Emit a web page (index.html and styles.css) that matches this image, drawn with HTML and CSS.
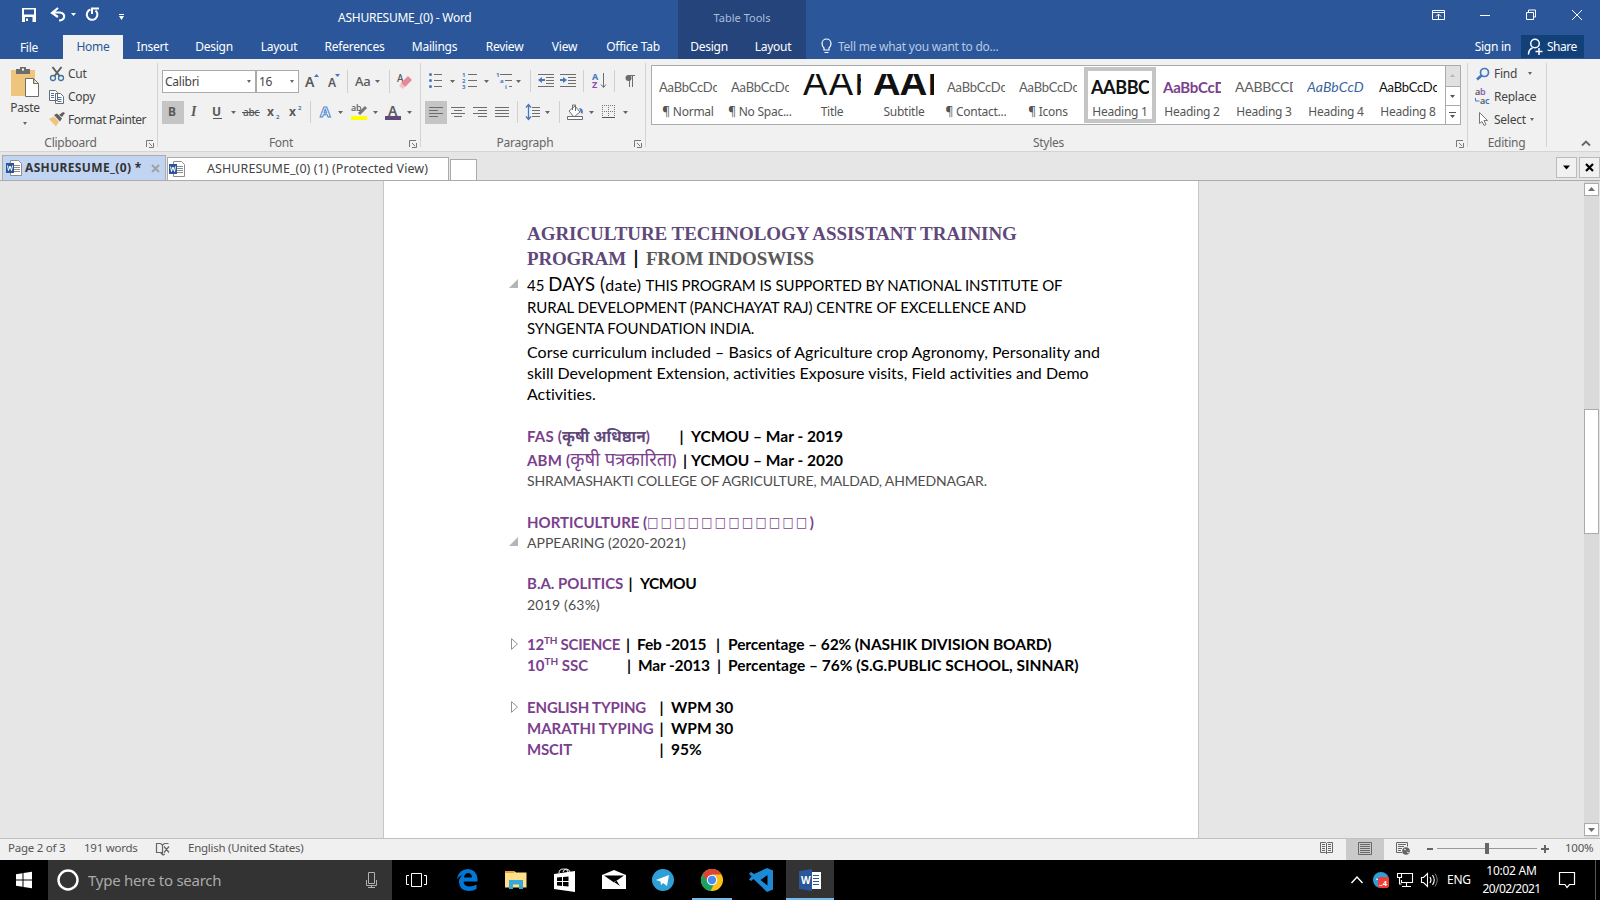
FILE: index.html
```html
<!DOCTYPE html>
<html lang="en">
<head>
<meta charset="utf-8">
<title>ASHURESUME_(0) - Word</title>
<link rel="stylesheet" href="styles.css">
</head>
<body>
<div class="app">
<header class="top">
  <div class="titlebar">
    <svg class="quick" viewBox="0 0 220 35" width="220" height="35">
      <path fill="#fff" fill-rule="evenodd" d="M22 8h14v14h-14zM24 9.500v5h10v-5zM25 17v5h7.500v-5zM26 18.500h2v2.500h-2z"/>
      <path d="M58 8l-6 5 6 4M53 12.500h7q5 1 4 5q-1 3-5 3" fill="none" stroke="#fff" stroke-width="2.200"/>
      <path d="M71 13h5l-2.500 3zM119 16h5l-2.500 4zM119 14h5v1h-5z" fill="#fff"/>
      <path d="M90.500 9.500a5.300 5.300 0 1 0 5 1M92 14V8.500h7" fill="none" stroke="#fff" stroke-width="2"/>
    </svg>
    <div class="apptitle"><span>ASHURESUME_(0) - Word</span></div>
    <div class="tabletools"><span>Table Tools</span></div>
    <svg class="winbtns" viewBox="1420 0 180 35" width="180" height="35" fill="none" stroke="#fff">
      <path d="M1432.500 10.500h12v9h-12zM1432.500 12.500h12M1438.500 19v-5M1436 16.500l2.500-2.500 2.500 2.500M1480 15.500h10M1526.500 12.500h7v7h-7zM1528.500 12v-2h7v7h-2M1572 10l10 10M1582 10l-10 10"/>
    </svg>
  </div>
  <nav class="tabs">
    <div class="tab file"><span>File</span></div>
    <div class="tab home"><span>Home</span></div>
    <div class="tab w59"><span>Insert</span></div>
    <div class="tab w64"><span>Design</span></div>
    <div class="tab w66"><span>Layout</span></div>
    <div class="tab w85"><span>References</span></div>
    <div class="tab w75"><span>Mailings</span></div>
    <div class="tab w65"><span>Review</span></div>
    <div class="tab w55"><span>View</span></div>
    <div class="tab w82"><span>Office Tab</span></div>
    <div class="tab tool w62"><span>Design</span></div>
    <div class="tab tool w66"><span>Layout</span></div>
    <svg viewBox="806 35 32 24" width="32" height="24" fill="none" stroke="#fff"><path d="M824 48q-2-2-2-4.500a4.500 4.500 0 0 1 9 0q0 2.500-2 4.500v2h-5zM824.500 52.500h4" stroke-width="1.200"/></svg>
    <span class="tell">Tell me what you want to do...</span>
    <span class="signin">Sign in</span>
    <div class="share">
      <svg viewBox="1521 35 24 23" width="24" height="23" fill="none" stroke="#fff" stroke-width="1.500"><circle cx="1533" cy="43.500" r="4.300"/><path d="M1526.500 54.500q0-5 4-6.500M1533.500 51.500h7M1537 48v7"/></svg>
      <span>Share</span>
    </div>
  </nav>
</header>

<section class="ribbon">
  <div class="group clip">
    <div class="body">
      <div class="paste">
        <svg viewBox="9 64 36 35" width="36" height="35"><path fill="#eec57a" d="M13 70h24v26h-24z"/><path fill="#6d6d6d" d="M18 69h4v-2h6v2h4v5h-14z"/><path fill="#fff" d="M24 68.500h2v2h-2z"/><path fill="#fff" stroke="#6d6d6d" d="M27.500 78.500h8l5 5v13h-13zM35.500 78.500v5h5"/></svg>
        <span>Paste</span>
        <i class="dd"></i>
      </div>
      <div class="cmds">
        <div class="cmd"><svg viewBox="48 62 18 22" width="18" height="22" fill="none"><path stroke="#5f5f5f" stroke-width="2" d="M52.500 66l7 9M61.500 66l-7 9"/><circle cx="53" cy="77" r="2.500" stroke="#41719c" stroke-width="1.300"/><circle cx="61" cy="77" r="2.500" stroke="#41719c" stroke-width="1.300"/></svg><span>Cut</span></div>
        <div class="cmd"><svg viewBox="48 85 18 22" width="18" height="22" fill="#fff" stroke="#6d6d6d"><path d="M49.500 89.500h6l2 2v8h-8zM55.500 92.500h5l3 3v7h-8z"/><path stroke="#4178be" d="M51 92.500h3M51 94.500h3M51 96.500h3M57.500 96.500h4M57.500 98.500h4M57.500 100.500h4"/></svg><span>Copy</span></div>
        <div class="cmd"><svg viewBox="48 109 18 22" width="18" height="22"><path fill="#eec57a" d="M49 119l5-2.500 5 5-3 5z"/><path fill="#5f5f5f" d="M54 115l3-1.500 5 5-2 3zM59 115l4-3 2 1-3 4z"/></svg><span class="fp">Format Painter</span></div>
      </div>
    </div>
    <div class="glabel"><span>Clipboard</span><svg class="launch" viewBox="0 0 8 8" width="8" height="8"><path d="M.5 7V.5H7M3 3l3 3M7.500 3v4.500h-4.500" fill="none" stroke="#777"/></svg></div>
  </div>

  <div class="group font">
    <div class="row1">
      <div class="combo name"><span>Calibri</span><i class="dd"></i></div>
      <div class="combo size"><span>16</span><i class="dd"></i></div>
      <svg viewBox="299 70 120 23" width="120" height="23">
        <g class="glyph semi"><text x="305" y="87" font-size="14">A</text><text x="328" y="87" font-size="12">A</text></g><text class="glyph2" x="355" y="86" font-size="13">Aa</text>
        <path fill="#4178be" d="M314 77l2.500-3 2.500 3zM335 74h5l-2.500 3z"/><path fill="#666" d="M375 80h5l-2.500 3z"/>
        <path stroke="#d0d0d0" d="M347.500 70v23M389.500 70v23"/>
        <text class="glyph2" x="397" y="82" font-size="10">A</text><path d="M401 83l7-7 4 4-7 7z" fill="#e8879a"/><path d="M401 83l4 4-2 2-4-3z" fill="#f5c0ca"/>
      </svg>
    </div>
    <div class="row2">
      <svg viewBox="162 101 256 23" width="256" height="23">
        <path fill="#c5c5c5" d="M162 101h22v23h-22z"/>
        <g class="glyph"><text x="168" y="116" font-size="12">B</text><text class="ital" x="191" y="116" font-size="14">I</text><text x="212" y="116" font-size="12">U</text><text x="267" y="116" font-size="12">x</text><text x="289" y="116" font-size="12">x</text></g>
        <text class="glyph2" x="243" y="116" font-size="10" textLength="16">abc</text>
        <path stroke="#555" d="M213 118.500h9M242 112.500h18"/>
        <text x="276" y="119" font-size="6" class="blue">2</text><text x="298" y="110" font-size="6" class="blue">2</text>
        <path fill="#666" d="M231 111h5l-2.500 3zM338 111h5l-2.500 3zM373 111h5l-2.500 3zM407 111h5l-2.500 3z"/>
        <path stroke="#d0d0d0" d="M310.500 101v22"/>
        <text class="glow" x="320" y="117" font-size="15">A</text>
        <text class="glyph2" x="351" y="111" font-size="9">ab</text><path stroke="#777" stroke-width="3" d="M366 107l-7 7"/><path fill="#ff0" d="M351 116h16v4h-16z"/>
        <text class="glyph semi" x="388" y="116" font-size="14">A</text><path fill="#5f497a" d="M385 116h16v4h-16z"/>
      </svg>
    </div>
    <div class="glabel"><span>Font</span><svg class="launch" viewBox="0 0 8 8" width="8" height="8"><path d="M.5 7V.5H7M3 3l3 3M7.500 3v4.500h-4.500" fill="none" stroke="#777"/></svg></div>
  </div>

  <div class="group para">
    <div class="row1">
      <svg viewBox="425 70 215 23" width="215" height="23">
        <g fill="#4178be"><circle cx="430.500" cy="74.500" r="1.500"/><circle cx="430.500" cy="80.500" r="1.500"/><circle cx="430.500" cy="86.500" r="1.500"/></g>
        <path stroke="#6d6d6d" d="M434 74.500h8M434 80.500h8M434 86.500h8M468 74.500h9M468 80.500h9M468 86.500h9M500 74.500h12M505 80.500h7M509 86.500h3"/>
        <g class="blue" font-size="6"><text x="462" y="77">1</text><text x="462" y="83">2</text><text x="462" y="89">3</text><text x="496" y="77">1</text><text x="500" y="83">a</text><text x="505" y="89">i</text></g>
        <path fill="#666" d="M450 80h5l-2.500 3zM484 80h5l-2.500 3zM516 80h5l-2.500 3z"/>
        <path stroke="#d0d0d0" d="M530.500 70v22M583.500 70v22M614.500 70v22"/>
        <path stroke="#6d6d6d" d="M538 74.500h16M546 77.500h8M546 80.500h8M546 83.500h8M538 86.500h16M560 74.500h16M568 77.500h8M568 80.500h8M568 83.500h8M560 86.500h16"/>
        <path fill="#4178be" d="M538 80l4-3v2h3v2h-3v2zM567 80l-4-3v2h-3v2h3v2z"/>
        <g class="blue" font-size="9"><text x="592" y="79.500">A</text><text class="purple" x="592" y="88">Z</text></g>
        <path d="M603.500 73v14M601 84.500l2.500 3 2.500-3" stroke="#6d6d6d" fill="none"/>
        <path d="M629.500 75v12M632.500 75v12M628 75.500h7" stroke="#6d6d6d"/><circle cx="628.500" cy="78" r="3" fill="#6d6d6d"/>
      </svg>
    </div>
    <div class="row2">
      <svg viewBox="425 101 215 23" width="215" height="23">
        <path fill="#c5c5c5" d="M425 101h22v23h-22z"/>
        <path stroke="#6d6d6d" d="M429 107.500h14M429 110.500h9M429 113.500h14M429 116.500h9M451 107.500h14M454 110.500h8M451 113.500h14M454 116.500h8M473 107.500h14M478 110.500h9M473 113.500h14M478 116.500h9M495 107.500h14M495 110.500h14M495 113.500h14M495 116.500h14M532 107.500h8M532 110.500h8M532 113.500h8M532 116.500h8"/>
        <path stroke="#d0d0d0" d="M517.500 101v22M559.500 101v22"/>
        <path d="M528.500 105v14M526 107.500l2.500-3 2.500 3M526 116.500l2.500 3 2.500-3" fill="none" stroke="#4178be" stroke-width="1.300"/>
        <path fill="#666" d="M545 111h5l-2.500 3zM589 111h5l-2.500 3zM623 111h5l-2.500 3z"/>
        <path fill="#fff" stroke="#6d6d6d" d="M569 111l6-5 5 6-6 5zM572.500 110v-5h3v6M567.500 116.500h15v3h-15z"/><path d="M579 108q5 0 3.500 6q-2-1-2.500-4z" fill="#4178be"/>
        <path d="M602 105.500h13M602 111.500h13M602.500 105v12M608.500 105v12M614.500 105v12" stroke="#777" stroke-dasharray="1 1"/><path stroke="#555" d="M602 117.500h13"/>
      </svg>
    </div>
    <div class="glabel"><span>Paragraph</span><svg class="launch" viewBox="0 0 8 8" width="8" height="8"><path d="M.5 7V.5H7M3 3l3 3M7.500 3v4.500h-4.500" fill="none" stroke="#777"/></svg></div>
  </div>

  <div class="group styles">
    <div class="gallery">
      <div class="style"><div class="prev"><span>AaBbCcDc</span></div><span>¶ Normal</span></div>
      <div class="style"><div class="prev"><span>AaBbCcDc</span></div><span>¶ No Spac...</span></div>
      <div class="style"><div class="prev title"><span>AAb</span></div><span>Title</span></div>
      <div class="style"><div class="prev title heavy"><span>AAB</span></div><span>Subtitle</span></div>
      <div class="style"><div class="prev"><span>AaBbCcDc</span></div><span>¶ Contact...</span></div>
      <div class="style"><div class="prev"><span>AaBbCcDc</span></div><span>¶ Icons</span></div>
      <div class="style on"><div class="prev h1"><span>AABBC</span></div><span>Heading 1</span></div>
      <div class="style"><div class="prev h2"><span>AaBbCcD</span></div><span>Heading 2</span></div>
      <div class="style"><div class="prev h3"><span>AABBCCD</span></div><span>Heading 3</span></div>
      <div class="style"><div class="prev h4"><span>AaBbCcD</span></div><span>Heading 4</span></div>
      <div class="style"><div class="prev h8"><span>AaBbCcDc</span></div><span>Heading 8</span></div>
      <svg class="gscroll" viewBox="1445 66 15 58" width="15" height="58"><path fill="#e1e1e1" d="M1445 66h15v20h-15z"/><path stroke="#ababab" d="M1445.500 66v58M1445 86.500h15M1445 105.500h15"/><path fill="#b5b5b5" d="M1450 77h5l-2.500-3z"/><path fill="#555" d="M1450 95h5l-2.500 3zM1450 115h5l-2.500 3zM1449 112h7v1h-7z"/></svg>
    </div>
    <div class="glabel"><span>Styles</span><svg class="launch" viewBox="0 0 8 8" width="8" height="8"><path d="M.5 7V.5H7M3 3l3 3M7.500 3v4.500h-4.500" fill="none" stroke="#777"/></svg></div>
  </div>

  <div class="group edit">
    <div class="cmds">
      <div class="cmd"><svg viewBox="1474 62 20 22" width="20" height="22" fill="none" stroke="#4178be"><circle cx="1484.500" cy="71.500" r="4" stroke-width="1.700"/><path stroke-width="2.600" d="M1481.500 74.500l-4.500 4"/></svg><span>Find</span><i class="dd far"></i></div>
      <div class="cmd"><svg viewBox="1474 85 20 22" width="20" height="22"><text class="glyph semi" x="1475" y="94" font-size="9">a<tspan fill="#8a5bb0">b</tspan></text><text class="glyph semi" x="1480" y="103" font-size="9">a<tspan fill="#4178be">c</tspan></text><path d="M1475.500 97v3h4" stroke="#4178be" fill="none"/></svg><span>Replace</span></div>
      <div class="cmd"><svg viewBox="1474 109 20 22" width="20" height="22"><path fill="#fff" stroke="#777" d="M1479.500 112.500v11l2.500-2 2 4 2-1-2-4h3.500z"/></svg><span>Select</span><i class="dd near"></i></div>
    </div>
    <div class="glabel"><span>Editing</span></div>
  </div>
  <svg class="collapse" viewBox="1578 136 14 14" width="14" height="14"><path d="M1581 145.500l4-4 4 4" fill="none" stroke="#666" stroke-width="1.800"/></svg>
</section>

<section class="doctabs">
  <div class="dtab act"><svg viewBox="0 0 17 16" width="17" height="16"><path fill="#fff" stroke="#8c8c8c" d="M4.500 .5h8l3 3v12h-11z"/><path stroke="#8c8c8c" d="M8 5.500h6M8 7.500h6M8 9.500h6M8 11.500h6"/><path fill="#2b579a" d="M0 3h8v10h-8z"/><path d="M1.500 5.500l1 5 1.500-4.500 1.500 4.500 1-5" fill="none" stroke="#fff"/></svg><span>ASHURESUME_(0) *</span><svg class="x" viewBox="0 0 9 9" width="9" height="9"><path d="M1 1l7 7M8 1l-7 7" stroke="#a0a0a0" stroke-width="1.800"/></svg></div>
  <div class="dtab prot"><svg viewBox="0 0 17 16" width="17" height="16"><path fill="#fff" stroke="#8c8c8c" d="M4.500 .5h8l3 3v12h-11z"/><path stroke="#8c8c8c" d="M8 5.500h6M8 7.500h6M8 9.500h6M8 11.500h6"/><path fill="#2b579a" d="M0 3h8v10h-8z"/><path d="M1.500 5.500l1 5 1.500-4.500 1.500 4.500 1-5" fill="none" stroke="#fff"/></svg><span>ASHURESUME_(0) (1) (Protected View)</span></div>
  <div class="dtab new"></div>
  <div class="dbtn first"><svg viewBox="0 0 19 19" width="19" height="19"><path d="M6 7.500h7l-3.500 4z"/></svg></div>
  <div class="dbtn"><svg viewBox="0 0 19 19" width="19" height="19"><path d="M6 6l7 7M13 6l-7 7" stroke="#000" stroke-width="2.200"/></svg></div>
</section>

<main class="work">
  <article class="page">
    <div class="ln g42 serif"><span class="s1">AGRICULTURE TECHNOLOGY ASSISTANT TRAINING</span></div>
    <div class="ln g3 serif"><span class="s2">PROGRAM</span><span class="bar">|</span><span class="s3">FROM INDOSWISS</span></div>
    <div class="ln g6 caps open"><span>45 </span><span class="big">DAYS (</span><span class="date16">date) </span><span class="a2">THIS PROGRAM IS SUPPORTED BY NATIONAL INSTITUTE OF</span></div>
    <div class="ln g2 caps"><span class="a3">RURAL DEVELOPMENT (PANCHAYAT RAJ) CENTRE OF EXCELLENCE AND</span></div>
    <div class="ln caps"><span class="a3">SYNGENTA FOUNDATION INDIA.</span></div>
    <div class="ln g2 lower"><span class="a5">Corse curriculum included – Basics of Agriculture crop Agronomy, Personality and</span></div>
    <div class="ln lower"><span>skill Development Extension, activities Exposure visits, Field activities and Demo</span></div>
    <div class="ln lower"><span>Activities.</span></div>
    <div class="ln g22 bold"><div class="c152 pur"><span class="b1">FAS (</span><span class="hi dark">कृषी अधिष्ठान</span><span>)</span></div><span class="c12 in2">|</span><span>YCMOU – Mar - 2019</span></div>
    <div class="ln g3 bold s20"><div class="c155 pur"><span class="b1">ABM (</span><span class="hi thin">कृषी पत्रकारिता</span><span>)</span></div><span class="c9 in3">|</span><span>YCMOU – Mar - 2020</span></div>
    <div class="ln sub"><span class="b3">SHRAMASHAKTI COLLEGE OF AGRICULTURE, MALDAD, AHMEDNAGAR.</span></div>
    <div class="ln g21 bold pur s20"><span>HORTICULTURE (</span><span class="boxes">□□□□□□□□□□□□</span><span>)</span></div>
    <div class="ln sub open"><span>APPEARING (2020-2021)</span></div>
    <div class="ln g20 bold"><div class="c101 pur"><span>B.A. POLITICS</span></div><span class="c12 in2">|</span><span class="b7">YCMOU</span></div>
    <div class="ln sub"><span class="b8">2019 (63%)</span></div>
    <div class="ln g19 bold"><svg class="shut" viewBox="0 0 8 12" width="8" height="12"><path d="M.5 .7v10.600l6-5.300z" fill="none" stroke="#888" stroke-width=".9"/></svg><div class="c99 pur"><span class="b9">12<sup>TH</sup> SCIENCE</span></div><span class="c11">|</span><div class="c79"><span class="d1">Feb -2015</span></div><span class="c12">|</span><span class="d2">Percentage – 62% (NASHIK DIVISION BOARD)</span></div>
    <div class="ln bold"><div class="c100 pur"><span>10<sup>TH</sup> SSC</span></div><span class="c11">|</span><div class="c79"><span class="d1">Mar -2013</span></div><span class="c11">|</span><span>Percentage – 76% (S.G.PUBLIC SCHOOL, SINNAR)</span></div>
    <div class="ln g21 bold"><svg class="shut" viewBox="0 0 8 12" width="8" height="12"><path d="M.5 .7v10.600l6-5.300z" fill="none" stroke="#888" stroke-width=".9"/></svg><div class="c132 pur"><span class="d4">ENGLISH TYPING</span></div><span class="c12 in2">|</span><span>WPM 30</span></div>
    <div class="ln bold"><div class="c132 pur"><span>MARATHI TYPING</span></div><span class="c12 in2">|</span><span>WPM 30</span></div>
    <div class="ln bold"><div class="c132 pur"><span class="d4">MSCIT</span></div><span class="c12 in2">|</span><span>95%</span></div>
  </article>
  <div class="scroll">
    <div class="sbtn"><svg viewBox="0 0 13 11" width="13" height="11"><path fill="#6d6d6d" d="M3 7h7l-3.500-4z"/></svg></div>
    <div class="thumb"></div>
    <div class="sbtn"><svg viewBox="0 0 13 11" width="13" height="11"><path fill="#6d6d6d" d="M3 4h7l-3.500 4z"/></svg></div>
  </div>
</main>

<footer class="status">
  <span class="st1">Page 2 of 3</span><span class="st2">191 words</span>
  <svg viewBox="150 838 30 21" width="30" height="21" fill="none" stroke="#666"><path d="M162 851.500h-5.500v-9h4l2 1.500v9.500l-2-2M162.500 844l2-1.500h4M165 853l-2 1M164 845.500l5 6M169 845.500l-5 6" stroke-width="1.200"/></svg>
  <span class="st3">English (United States)</span>
  <svg class="views" viewBox="1310 839 250 21" width="250" height="21">
    <path fill="#cacaca" d="M1346 839h38v21h-38z"/>
    <path d="M1320.500 842.500h5l1 1 1-1h5v10h-5l-1 1-1-1h-5zM1326.500 843v11M1322 844.500h3M1322 846.500h3M1322 848.500h3M1322 850.500h3M1328 844.500h3M1328 846.500h3M1328 848.500h3M1328 850.500h3M1358.500 842.500h13v12h-13zM1360 844.500h10M1360 846.500h10M1360 848.500h10M1360 850.500h10M1360 852.500h10M1402 852.500h-5.500v-10h11v4M1398 844.500h8M1398 846.500h6M1398 848.500h4M1398 850.500h3" fill="none" stroke="#666"/>
    <circle cx="1406" cy="851" r="3.800" fill="#666"/><path d="M1404 849l2 1M1407 852l2 1" stroke="#eee"/>
    <path stroke="#999" d="M1437 848.500h100"/><path fill="#666" d="M1427 848h6v2h-6zM1485 843h4v11h-4zM1541 848h8v2h-8zM1544 845h2v8h-2z"/>
  </svg>
  <span class="st4">100%</span>
</footer>

<footer class="task">
  <svg viewBox="0 860 48 40" width="48" height="40"><path fill="#fff" d="M16 874.300l6.500-1v6.200h-6.500zM23.500 873l8.500-1.200v7.700h-8.500zM16 880.500h6.500v6.200l-6.500-1zM23.500 880.500h8.500v7.700l-8.500-1.200z"/></svg>
  <div class="search"><svg viewBox="48 860 40 40" width="40" height="40"><circle cx="68" cy="880" r="9.500" fill="none" stroke="#fff" stroke-width="2.400"/></svg><span>Type here to search</span><svg class="mic" viewBox="360 860 24 40" width="24" height="40" fill="none" stroke="#b0b0b0"><path d="M368.500 872.500h6v11h-6zM366.500 880v5.500h10v-5.500M371.500 886v2M368 887.500h7"/></svg></div>
  <svg viewBox="392 860 442 40" width="442" height="40">
    <path d="M411.500 873.500h10v13h-10zM409 875.500h-2.500v9h2.500M424 875.500h2.500v9h-2.500" fill="none" stroke="#fff"/>
    <path fill="#0078d7" d="M457 879q2-10 11-10q10 1 9.500 12.500h-14q.5 5 6 5q4 0 7-2v4.500q-3 2-8 2q-9-.5-9.500-9q0-5 4.500-7.500q-4 1-6.500 4.500zM464 877.500h8q0-4-3.500-4.500q-4 0-4.500 4.500z"/>
    <path fill="#ffe08a" d="M505 871h9l2 1.500h10.500v15h-21.500z"/><path fill="#e8a33d" d="M505 871h9v2h-9z"/><path fill="#36a9d9" d="M509 880h14v9h-4v-4.500h-6v4.500h-4z"/>
    <path fill="#fff" d="M554 874l21-3v21l-21-3z"/><path d="M559 873q0-4 4.500-4t4.500 4M563 872q1-3 3.500-3t3.500 3" fill="none" stroke="#fff"/><path fill="#000" d="M557 877.500l5-.5v4h-5zM563 877l5.500-.5v4.500h-5.500zM557 882h5v4l-5-.5zM563 882h5.500v4.500l-5.500-.5z"/>
    <path fill="#fff" d="M602 875l12-5 12 5v14h-24z"/><path fill="#000" d="M604 875.500h20l-10 7zM614 882l6 4-3.500-5.500z"/>
    <circle cx="663" cy="880" r="11" fill="#2f9fd8"/><path fill="#fff" d="M656 880l13-5-2 11-4-3-2 2-.5-3.500z"/>
    <circle cx="712" cy="880" r="11" fill="#fbc116"/><path fill="#dc4437" d="M702.500 874.500a11 11 0 0 1 19 0h-9.500l-5 8z"/><path fill="#1aa260" d="M702.500 874.500l6 8 5 2.500-3 6a11 11 0 0 1-8-16.500z"/><circle cx="712" cy="880" r="5.200" fill="#fff"/><circle cx="712" cy="880" r="4.200" fill="#4a8af4"/>
    <path fill="#1d8ad6" d="M767 868l6 2.500v19l-6 2.500-13.500-13-2.500 2-2-1.500 2.500-3-2.500-3 2-1.500 3 2zM767.500 875l-7 5 7 5.500z" fill-rule="evenodd"/>
    <path fill="#333" d="M786 860h48v38h-48z"/><path fill="#76b9ed" d="M692 898h40v2h-40zM786 898h48v2h-48z"/>
    <path fill="#fff" d="M811 872h10v17h-10z"/><path stroke="#2b579a" d="M813 875.500h6M813 878.500h6M813 881.500h6M813 884.500h6"/><path fill="#2b579a" d="M799 871l13-2v22l-13-2z"/><text class="w" x="801" y="884" font-size="10">W</text>
  </svg>
  <svg class="tray" viewBox="1340 860 104 40" width="104" height="40" fill="none" stroke="#fff">
    <path d="M1351.500 883l5.500-6 5.500 6" stroke-width="1.400"/><circle cx="1381" cy="880" r="8" fill="#2f9fd8" stroke="none"/><path d="M1376 879l4 1" /><rect x="1378" y="877" width="11" height="11" rx="2.500" fill="#f23c34" stroke="none"/><text x="1379" y="886" font-size="7.500" class="badge">..4</text>
    <path d="M1401.500 873.500h11v9h-11M1401.500 880v3M1406.500 883v3M1402 886.500h9M1397.500 873.500h4v4h-4zM1399.500 878v6h2M1421.500 877.500h2l4-4v13l-4-4h-2zM1430 877q2 3 0 6M1432.500 875q3.500 5 0 10" stroke-width="1.100"/><path d="M1435 873.500q4.500 6.500 0 13" stroke="#777"/>
  </svg>
  <span class="eng">ENG</span>
  <div class="clock"><span>10:02 AM</span><span class="date">20/02/2021</span></div>
  <svg viewBox="1552 860 48 40" width="48" height="40" fill="none" stroke="#fff"><path d="M1559.500 872.500h15v12h-5l-2.500 3-2-3h-5.500z" stroke-width="1.200"/><path stroke="#555" d="M1595.500 860v40"/></svg>
</footer>
</div>
</body>
</html>
```
FILE: styles.css
```css
*{box-sizing:border-box}
body{margin:0;font-family:"Noto Sans","Open Sans",sans-serif;font-size:12px;letter-spacing:-.25px;color:#444}
svg{display:block;flex:none}
span{white-space:nowrap}
.app{width:1600px;height:900px;display:flex;flex-direction:column;background:#e6e6e6;overflow:hidden}

/* title bar and ribbon tabs */
.top{background:#2b579a;color:#fff;height:59px}
.titlebar{height:35px;display:flex}
.apptitle{width:458px;line-height:35px;padding-left:118px}
.tabletools{width:128px;background:#24447b;color:#a9bede;text-align:center;line-height:36px;font-size:11px;letter-spacing:0}
.winbtns{margin-left:auto}
.tabs{height:24px;display:flex;line-height:23px}
.tab{text-align:center;flex:none}
.file{width:58px;margin-right:5px;padding-top:1px}
.home{width:60px;background:#f1f1f1;color:#2b579a}
.w55{width:55px}.w59{width:59px}.w62{width:62px}.w64{width:64px}.w65{width:65px}.w66{width:66px}.w75{width:75px}.w85{width:85px}
.w82{width:82px;margin-right:4px}
.tool{background:#24447b}
.tell{color:#b8c8e2}
.signin{margin-left:auto;margin-right:10px}
.share{width:63px;height:23px;margin-right:16px;background:#124078;display:flex;padding-left:2px;letter-spacing:-.5px}

/* ribbon */
.ribbon{height:93px;background:#f1f1f1;border-bottom:1px solid #d4d4d4;display:flex}
.group{display:flex;flex-direction:column;position:relative;height:92px}
.group::after{content:"";position:absolute;right:0;top:4px;height:84px;width:1px;background:#d4d4d4}
.glabel{margin-top:auto;height:16px;line-height:16px;text-align:center;color:#666;position:relative;padding-right:17px}
.launch{position:absolute;right:4px;top:5px}
.clip{width:158px}.font{width:263px}.para{width:225px}.styles{width:822px}.edit{width:79px}
.edit .glabel{padding-right:2px}
.dd{display:block;width:0;height:0;border:2.500px solid transparent;border-top:3px solid #666;border-bottom:0;flex:none}
.body{display:flex}
.paste{width:48px;display:flex;flex-direction:column;align-items:center;padding:5px 0 0 2px}
.paste span{line-height:18px}
.paste .dd{margin-top:5px}
.cmds{display:flex;flex-direction:column;padding-top:3px}
.cmd{height:23px;display:flex;align-items:center;line-height:22px}
.cmd span{margin-left:2px}
.fp{letter-spacing:-.45px}
.edit .cmds{padding-left:6px}
.edit .cmd span{margin-left:0}
.far{margin-left:11px}.near{margin-left:4px}
.row1{display:flex;margin:11px 0 0 4px;height:23px}
.row2{display:flex;margin:8px 0 0 4px;height:23px}
.combo{height:23px;background:#fff;border:1px solid #ababab;display:flex;align-items:center;justify-content:space-between;padding:0 4px 0 2px}
.name{width:94px}.size{width:43px}
.glyph{font-weight:700;fill:#5a5a5a}
.semi{font-weight:600}
.glyph2{fill:#5a5a5a;font-weight:500}
.ital{font-style:italic;font-family:"Liberation Serif",serif}
.blue{fill:#4178be;font-weight:700}.purple{fill:#8a4fa8}
.glow{fill:#fff;stroke:#4a86cf;stroke-width:1px;font-weight:700}

/* style gallery */
.gallery{margin:6px 0 0 5px;width:810px;height:60px;background:#fff;border:1px solid #ababab;display:flex}
.style{width:72px;height:58px;display:flex;flex-direction:column;align-items:center;color:#555;line-height:18px}
.style.on{border:4px solid #c5c5c5;height:56px;margin-top:1px}
.prev{width:58px;height:36px;overflow:hidden;padding-top:10px;line-height:22px;font-family:Lato,sans-serif;font-size:13px;margin-bottom:1px;flex:none;color:#606060}
.prev.title{padding-top:0;font-size:36px;line-height:30px;color:#111;margin-top:8px;height:28px;letter-spacing:1.500px}
.prev.title span{display:block;margin-top:-8px}
.prev.heavy{font-weight:900;letter-spacing:1.500px;width:60px}
.prev.h1{font-size:18px;letter-spacing:-.4px;color:#111;font-weight:700;height:31px;padding-top:5px}
.prev.h2{font-size:15px;color:#7b3f8d;font-weight:700}
.prev.h3{font-size:14px}
.prev.h4{font-size:14px;letter-spacing:.1px;font-style:italic;color:#3a64a0}
.prev.h8{color:#111}
.gscroll{margin-left:auto}
.collapse{margin:77px 0 0 32px}

/* document tabs */
.doctabs{height:29px;background:#e6e6e6;border-bottom:1px solid #ababab;display:flex;align-items:flex-end}
.dtab{border:1px solid #ababab;border-bottom:0;display:flex;align-items:center;background:#fff}
.act{width:164px;height:25px;margin-left:2px;background:#c1d4f1;font-weight:700;color:#333;padding-left:3px}
.act span{margin-left:2px;margin-top:-2px;letter-spacing:.35px}
.x{margin-left:auto;margin-right:5px}
.prot{width:282px;height:23px;margin-left:1px;padding-left:1px;font-size:12.500px}
.prot span{margin-left:21px;margin-top:-1px;letter-spacing:.07px}
.new{width:27px;height:21px;margin-left:1px}
.dbtn{width:21px;height:21px;border:1px solid #bbb;background:#f1f1f1;margin:0 0 2px 2px}
.dbtn.first{margin-left:auto}

/* document */
.work{height:657px;display:flex}
.page{width:816px;margin-left:383px;background:#fff;border:1px solid #c6c6c6;border-width:0 1px;padding-left:143px;color:#000;font-family:Lato,sans-serif;font-size:15.500px;letter-spacing:0;font-variant-ligatures:none}
.ln{height:21px;line-height:21px;display:flex;align-items:baseline;position:relative;white-space:pre}
.ln span{white-space:pre}
.g2{margin-top:2px}.g3{margin-top:3px}.g6{margin-top:6px}.g19{margin-top:19px}.g20{margin-top:20px}.g21{margin-top:21px}.g22{margin-top:22px}.g42{margin-top:42px}
.s20{height:20px}
.caps{font-size:15px}
.lower{font-size:16px}
.serif{font-family:"Liberation Serif",serif;font-weight:700;font-size:19px;color:#5f497a}
.s1{letter-spacing:-.05px}.s2{letter-spacing:-.2px}
.bar{color:#000;width:20px;text-align:center;font-family:Lato,sans-serif}
.s3{color:#595959;letter-spacing:-.18px}
.big{font-size:18.500px;letter-spacing:.2px}
.date16{font-size:16px;letter-spacing:.2px}
.a2{letter-spacing:-.08px}
.a3{letter-spacing:-.09px}.a5{letter-spacing:.04px}
.bold{font-weight:700}
.pur{color:#7b3f8d;font-size:15px}
.dark{color:#5f497a;font-size:15.500px}
.hi{font-family:"Noto Sans Devanagari","Noto Sans",sans-serif}
.thin{font-weight:400;font-size:18.500px}
.ln.sub{color:#4d4d4d;font-size:14px}
.b1{letter-spacing:.2px}.b3{letter-spacing:-.14px}.b7{letter-spacing:-.4px}.b8{letter-spacing:.2px}.b9{letter-spacing:-.25px}
.d1{letter-spacing:-.15px}.d2{letter-spacing:-.08px}.d4{letter-spacing:-.15px}
.boxes{font-family:"DejaVu Sans",sans-serif;font-weight:400;font-size:12px;letter-spacing:2.200px;display:inline-block;transform:translateY(-2px) scaleY(1.2)}
sup{font-size:10px;line-height:0;vertical-align:6px}
.c9{width:9px}.c11{width:11px}.c12{width:12px}.c79{width:79px}.c99{width:99px}.c100{width:100px}.c101{width:101px}.c132{width:132px}.c152{width:152px}.c155{width:155px}
.in2{padding-left:.5px}.in3{padding-left:1px}
.open::before{content:"";position:absolute;left:-18px;top:5px;border-left:9px solid transparent;border-bottom:9px solid #b5b5b5}
.shut{position:absolute;left:-16px;top:4px}
.scroll{width:16px;margin-left:auto;background:#dadada;border-right:1px solid #e6e6e6;display:flex;flex-direction:column}
.sbtn{width:15px;height:13px;border:1px solid #ababab;background:#fff;margin:2px 0}
.thumb{width:15px;height:125px;margin:211px 0 auto;background:#fff;border:1px solid #ababab}

/* status bar */
.status{height:22px;background:#f0f0f0;border-top:1px solid #c0c0c0;display:flex;line-height:18px;font-size:11.500px;color:#555;padding-left:8px}
.st1{width:76px}.st2{width:66px}.st3{margin-left:8px}.views{margin-left:auto}.st4{width:35px;margin-left:5px}

/* taskbar */
.task{height:40px;background:#000;display:flex;color:#fff}
.search{width:344px;background:#333;display:flex;color:#aaa;font-size:15px;line-height:41px}
.mic{margin-left:auto;margin-right:8px}
.w,.badge{fill:#fff;font-weight:700;stroke:none}
.tray{margin-left:auto}
.eng{width:37px;padding-left:3px;line-height:40px}
.clock{width:61px;margin-right:10px;display:flex;flex-direction:column;align-items:center;line-height:18px;padding-top:2px}
.date{letter-spacing:-.6px}
```
